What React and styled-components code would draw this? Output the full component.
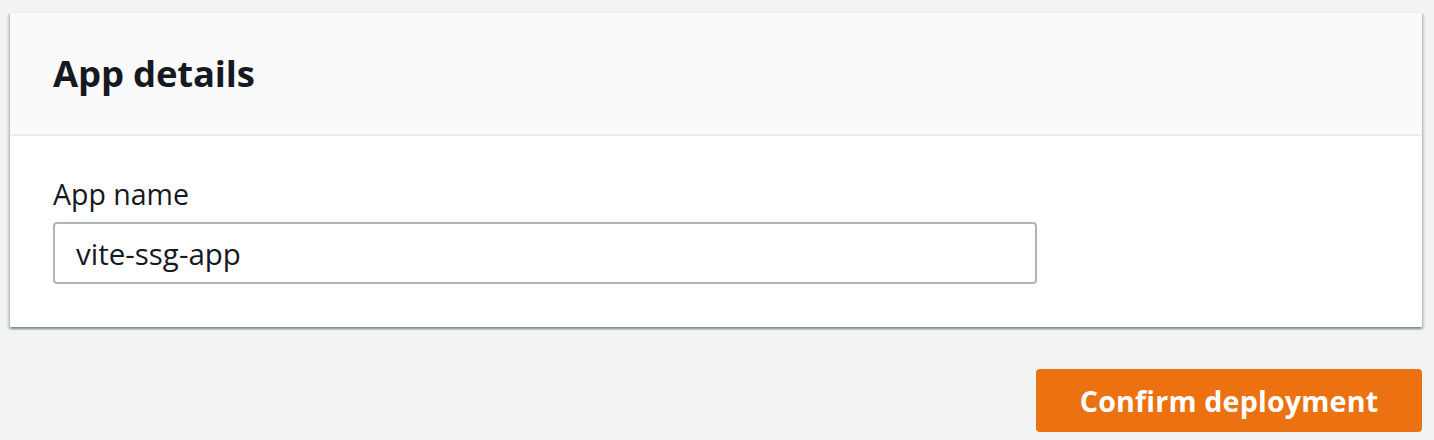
import React from "react";
import styled, { createGlobalStyle } from "styled-components";

const Global = createGlobalStyle`
  html, body { margin: 0; padding: 0; background: #f2f3f3; }
  body { font-family: "Open Sans", "Liberation Sans", Arial, sans-serif; color: #16191f; }
`;

const Page = styled.div`
  padding: 12px 12px 0 10px;
  display: flex;
  flex-direction: column;
  height: 440px;
  box-sizing: border-box;
`;

const Panel = styled.section`
  background: #ffffff;
  box-shadow: 0 2px 2px 0 rgba(0, 28, 36, 0.3), 2px 2px 2px 0 rgba(0, 28, 36, 0.15),
    -2px 2px 2px 0 rgba(0, 28, 36, 0.15);
  border-top: 1px solid #eaeded;
`;

const PanelHeader = styled.header`
  height: 123px;
  box-sizing: border-box;
  background: #fafafa;
  border-bottom: 2px solid #eaeded;
  display: flex;
  align-items: center;
  padding: 0 43px 1px;
`;

const Title = styled.h2`
  margin: 0;
  font-size: 36.5px;
  font-weight: 700;
  letter-spacing: -0.2px;
  color: #16191f;
`;

const PanelBody = styled.div`
  padding: 38px 43px 43px;
  display: flex;
  flex-direction: column;
`;

const Label = styled.label`
  font-size: 28.5px;
  line-height: 40px;
  color: #16191f;
  margin-bottom: 8px;
`;

const Input = styled.input`
  width: 984px;
  height: 62px;
  box-sizing: border-box;
  border: 2px solid #aab7b8;
  border-radius: 4px;
  padding: 0 21px;
  font-family: inherit;
  font-size: 29.5px;
  color: #16191f;
  background: #fff;
  outline: none;
`;

const Actions = styled.div`
  display: flex;
  justify-content: flex-end;
  margin-top: 42px;
`;

const PrimaryButton = styled.button`
  width: 386px;
  height: 63px;
  background: #ec7211;
  border: none;
  border-radius: 4px;
  color: #fff;
  font-family: inherit;
  font-weight: 700;
  font-size: 28.6px;
  letter-spacing: 0.2px;
  cursor: pointer;
`;

export default function App() {
  return (
    <>
      <Global />
      <Page>
        <Panel>
          <PanelHeader>
            <Title>App details</Title>
          </PanelHeader>
          <PanelBody>
            <Label htmlFor="app-name">App name</Label>
            <Input id="app-name" defaultValue="vite-ssg-app" />
          </PanelBody>
        </Panel>
        <Actions>
          <PrimaryButton>Confirm deployment</PrimaryButton>
        </Actions>
      </Page>
    </>
  );
}
